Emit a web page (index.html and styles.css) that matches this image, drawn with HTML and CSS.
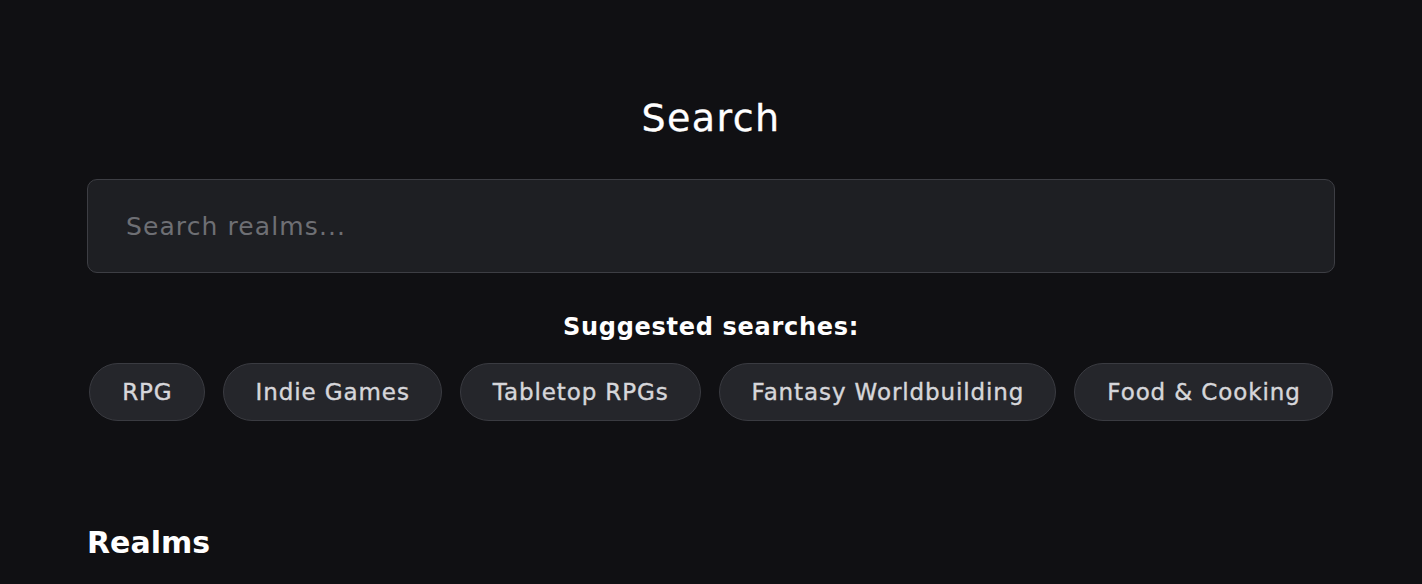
FILE: index.html
```html
<!DOCTYPE html>
<html lang="en">
<head>
<meta charset="utf-8">
<title>Search</title>
<link rel="stylesheet" href="styles.css">
</head>
<body>
<main class="page">
  <h1 class="title">Search</h1>
  <div class="search-box">
    <input class="search-input" type="text" placeholder="Search realms...">
  </div>
  <p class="suggest-label">Suggested searches:</p>
  <div class="pills">
    <button class="pill">RPG</button>
    <button class="pill">Indie Games</button>
    <button class="pill">Tabletop RPGs</button>
    <button class="pill">Fantasy Worldbuilding</button>
    <button class="pill">Food &amp; Cooking</button>
  </div>
  <h2 class="section-title">Realms</h2>
</main>
</body>
</html>
```

FILE: styles.css
```css
* { box-sizing: border-box; }
html, body {
  margin: 0;
  padding: 0;
  background: #101013;
  height: 100%;
}
body {
  font-family: "DejaVu Sans", "Noto Sans", sans-serif;
  color: #ffffff;
}
.page {
  width: 1248px;
  margin: 0 auto;
  padding-top: 94px;
  display: flex;
  flex-direction: column;
}
.title {
  margin: 0;
  font-size: 38px;
  font-weight: 400;
  letter-spacing: 1.4px;
  line-height: 48px;
  text-align: center;
  color: #ffffff;
  -webkit-text-stroke: 0.3px currentColor;
}
.search-box {
  margin-top: 37px;
}
.search-input {
  width: 100%;
  height: 94px;
  background: #1e1f23;
  border: 1.5px solid #3d3e44;
  border-radius: 10px;
  padding: 0 38px;
  font-family: inherit;
  font-size: 25px;
  letter-spacing: 1.1px;
  color: #e4e4e7;
  outline: none;
}
.search-input::placeholder {
  color: #6e6f74;
}
.suggest-label {
  margin: 38px 0 0;
  font-size: 24px;
  font-weight: 700;
  letter-spacing: 0.7px;
  line-height: 32px;
  text-align: center;
}
.pills {
  margin-top: 20px;
  display: flex;
  justify-content: center;
  gap: 18px;
}
.pill {
  flex: none;
  white-space: nowrap;
  height: 58px;
  padding: 0 31px 0 32px;
  border-radius: 999px;
  background: #25262b;
  border: 1.5px solid #3a3b41;
  color: #d6d6da;
  font-family: inherit;
  font-size: 23px;
  font-weight: 400;
  letter-spacing: 0.9px;
  -webkit-text-stroke: 0.4px currentColor;
}
.section-title {
  margin: 106px 0 0;
  font-size: 30px;
  font-weight: 700;
  line-height: 32px;
}
```
